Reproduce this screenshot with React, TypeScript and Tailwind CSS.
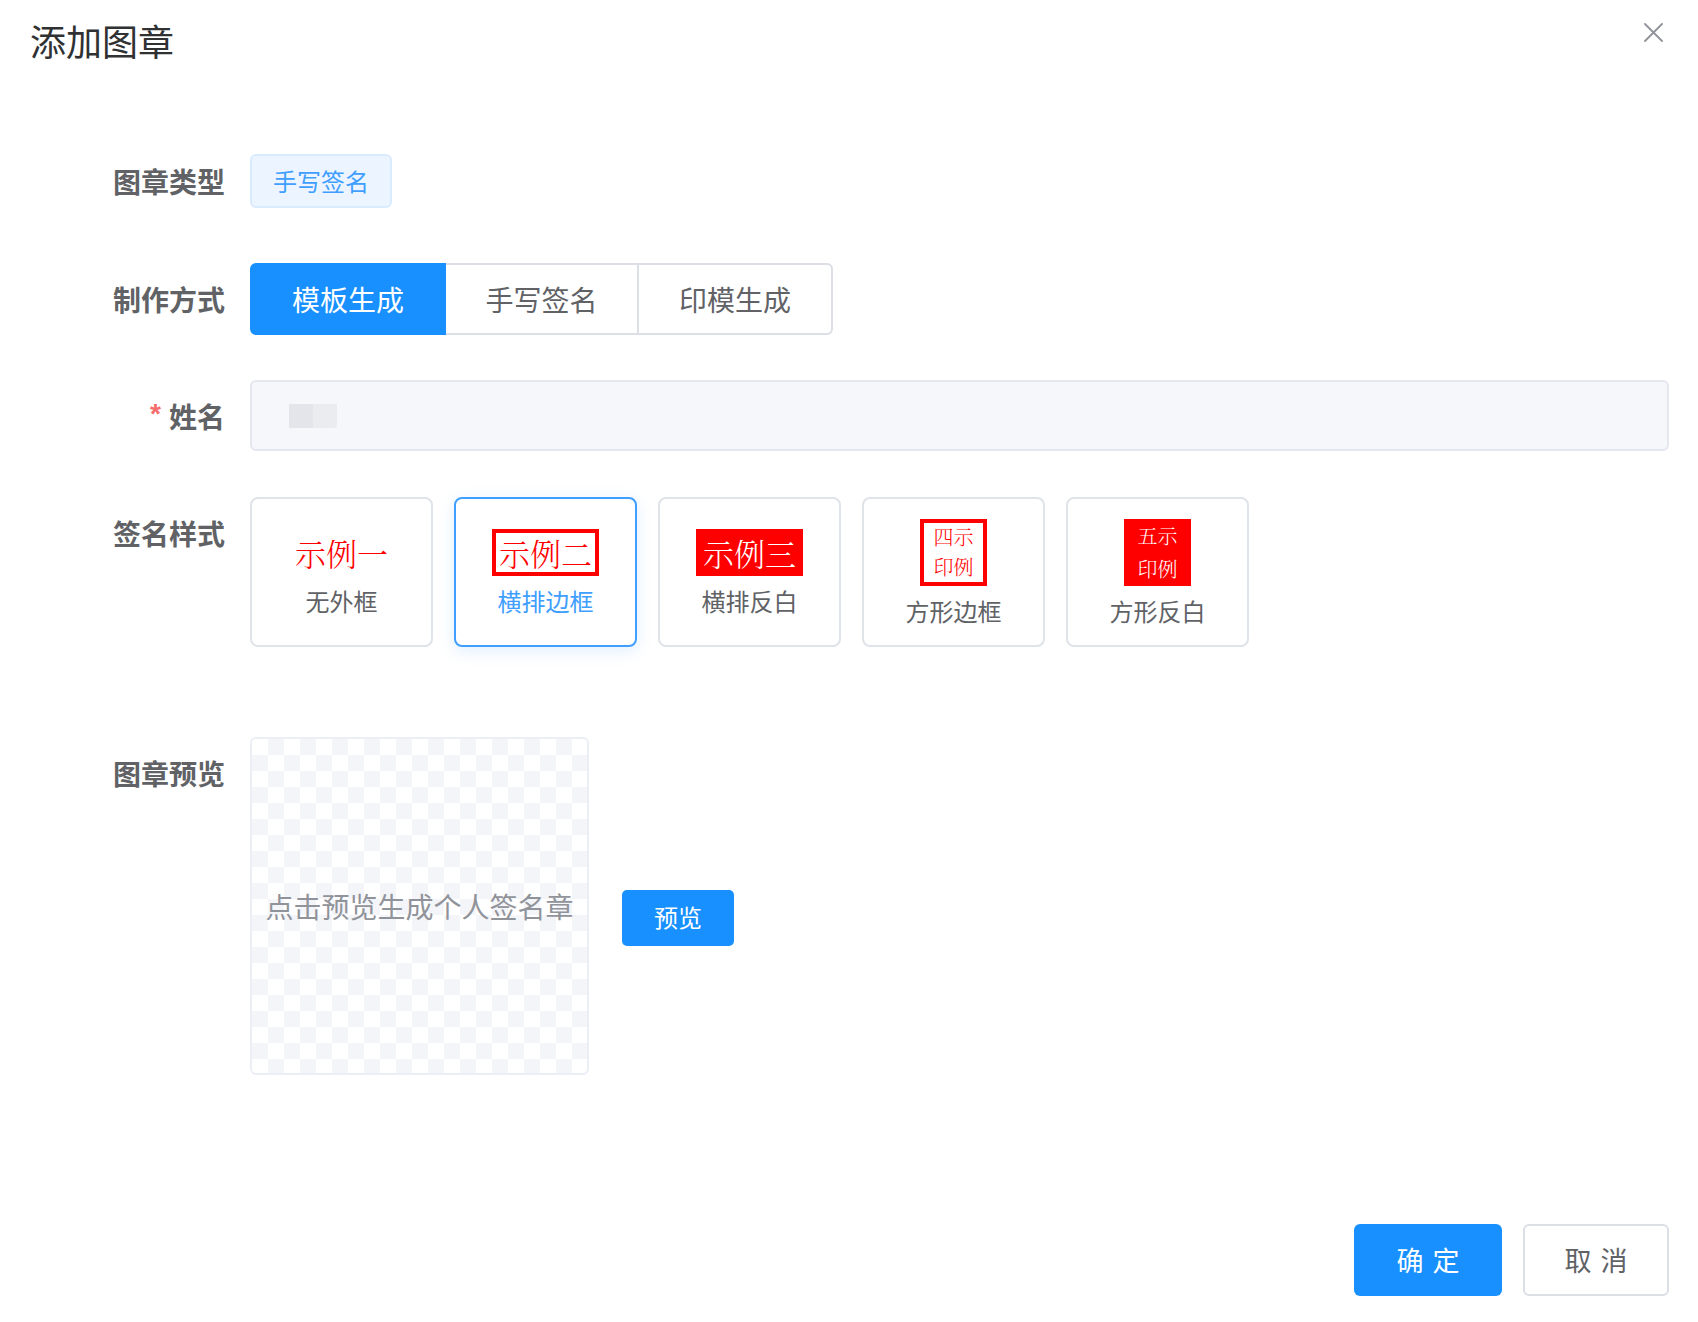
import React from "react";

const serif = "font-['Noto_Serif_CJK_SC','Noto_Serif_CJK','Noto_Sans_CJK_SC',serif] font-light";

function Label({ children, required }: { children: React.ReactNode; required?: boolean }) {
  return (
    <div className="w-[250px] shrink-0 pr-[25px] h-[71px] flex items-center justify-end text-[28px] font-bold text-[#606266] leading-none">
      {required && (
        <span className="font-['Liberation_Sans',sans-serif] text-[#f56c6c] text-[28px] mr-[8px] font-bold mt-[-3px]">*</span>
      )}
      {children}
    </div>
  );
}

function Card({
  selected,
  label,
  children,
}: {
  selected?: boolean;
  label: string;
  children: React.ReactNode;
}) {
  return (
    <div
      className={
        selected
          ? "w-[183px] h-[150px] rounded-[8px] border-2 border-[#409eff] bg-white shadow-[0_4px_16px_rgba(64,158,255,0.16)] flex flex-col items-center justify-center gap-[10px]"
          : "w-[183px] h-[150px] rounded-[8px] border-2 border-[#dfe3ea] bg-white flex flex-col items-center justify-center gap-[10px]"
      }
    >
      {children}
      <div
        className={
          selected
            ? "text-[24px] leading-[30px] text-[#409eff]"
            : "text-[24px] leading-[30px] text-[#606266]"
        }
      >
        {label}
      </div>
    </div>
  );
}

export default function App() {
  return (
    <div className="min-h-[1322px] w-full bg-white font-['Noto_Sans_CJK_SC','Noto_Sans',sans-serif] text-[#606266]">
      {/* header */}
      <div className="flex items-start justify-between pl-[30px] pr-[35px] pt-[22px]">
        <h1 className="text-[36px] leading-[36px] font-normal text-[#303133]">添加图章</h1>
        <button className="mt-[1px] w-[19px] h-[19px]" aria-label="close">
          <svg width="19" height="19" viewBox="0 0 19 19">
            <path d="M1 1 L18 18 M18 1 L1 18" stroke="#909399" strokeWidth="1.8" strokeLinecap="round" />
          </svg>
        </button>
      </div>

      {/* row 1 */}
      <div className="flex mt-[87px]">
        <Label>图章类型</Label>
        <div className="h-[71px] flex items-center">
          <span className="h-[54px] px-[21px] flex items-center rounded-[6px] border-2 border-[#d9ecff] bg-[#ecf5ff] text-[24px] text-[#409eff]">
            手写签名
          </span>
        </div>
      </div>

      {/* row 2 */}
      <div className="flex mt-[47px]">
        <Label>制作方式</Label>
        <div className="flex h-[72px]">
          <button className="w-[196px] h-[72px] rounded-l-[6px] bg-[#1890ff] border-2 border-[#1890ff] text-white text-[28px]">
            模板生成
          </button>
          <button className="w-[193px] h-[72px] border-y-2 border-r-2 border-[#dcdfe6] bg-white text-[#606266] text-[28px]">
            手写签名
          </button>
          <button className="w-[194px] h-[72px] rounded-r-[6px] border-y-2 border-r-2 border-[#dcdfe6] bg-white text-[#606266] text-[28px]">
            印模生成
          </button>
        </div>
      </div>

      {/* row 3 */}
      <div className="flex mt-[45px] pr-[29px]">
        <Label required>姓名</Label>
        <div className="flex-1 h-[71px] rounded-[6px] border-2 border-[#e4e7ed] bg-[#f5f7fa] flex items-center pl-[37px]">
          <div className="flex h-[24px] blur-[0.6px]">
            <div className="w-[24px] h-[24px] bg-[#e4e5ea]" />
            <div className="w-[24px] h-[24px] bg-[#ebecf0] rounded-br-[3px]" />
          </div>
        </div>
      </div>

      {/* row 4 */}
      <div className="flex mt-[46px]">
        <Label>签名样式</Label>
        <div className="flex gap-[21px]">
          <Card label="无外框">
            <div className="h-[47px] flex items-center">
              <span className={`${serif} text-[31px] leading-none text-[#ff0000]`}>示例一</span>
            </div>
          </Card>
          <Card label="横排边框" selected>
            <div className="h-[47px] flex items-center border-4 border-[#ff0000] px-[3px]">
              <span className={`${serif} text-[31px] leading-none text-[#ff0000]`}>示例二</span>
            </div>
          </Card>
          <Card label="横排反白">
            <div className="h-[47px] flex items-center bg-[#ff0000] px-[7px]">
              <span className={`${serif} text-[31px] leading-none text-white`}>示例三</span>
            </div>
          </Card>
          <Card label="方形边框">
            <div className="w-[67px] h-[67px] border-4 border-[#ff0000] flex flex-col items-center justify-center">
              <span className={`${serif} text-[20px] leading-[30px] text-[#ff0000]`}>四示</span>
              <span className={`${serif} text-[20px] leading-[30px] text-[#ff0000]`}>印例</span>
            </div>
          </Card>
          <Card label="方形反白">
            <div className="w-[67px] h-[67px] bg-[#ff0000] flex flex-col items-center justify-center">
              <span className={`${serif} text-[20px] leading-[33px] text-white`}>五示</span>
              <span className={`${serif} text-[20px] leading-[33px] text-white`}>印例</span>
            </div>
          </Card>
        </div>
      </div>

      {/* row 5 */}
      <div className="flex mt-[90px]">
        <Label>图章预览</Label>
        <div className="flex items-start">
          <div className="w-[339px] h-[338px] rounded-[6px] border-2 border-[#ebeef5] bg-[conic-gradient(#f4f5f9_25%,#ffffff_0_50%,#f4f5f9_0_75%,#ffffff_0)] bg-[length:32px_32px] flex items-center justify-center">
            <span className="text-[28px] leading-none text-[#909399] whitespace-nowrap">点击预览生成个人签名章</span>
          </div>
          <button className="ml-[33px] mt-[153px] w-[112px] h-[56px] rounded-[5px] bg-[#1890ff] text-white text-[24px] leading-none pb-[2px]">
            预览
          </button>
        </div>
      </div>

      {/* footer */}
      <div className="flex justify-end gap-[21px] pr-[29px] mt-[149px] pb-[26px]">
        <button className="w-[148px] h-[72px] rounded-[6px] bg-[#1890ff] text-white text-[27px] flex items-center justify-center gap-[9px]">
          <span>确</span>
          <span>定</span>
        </button>
        <button className="w-[146px] h-[72px] rounded-[6px] border-2 border-[#dcdfe6] bg-white text-[#606266] text-[27px] flex items-center justify-center gap-[9px]">
          <span>取</span>
          <span>消</span>
        </button>
      </div>
    </div>
  );
}
